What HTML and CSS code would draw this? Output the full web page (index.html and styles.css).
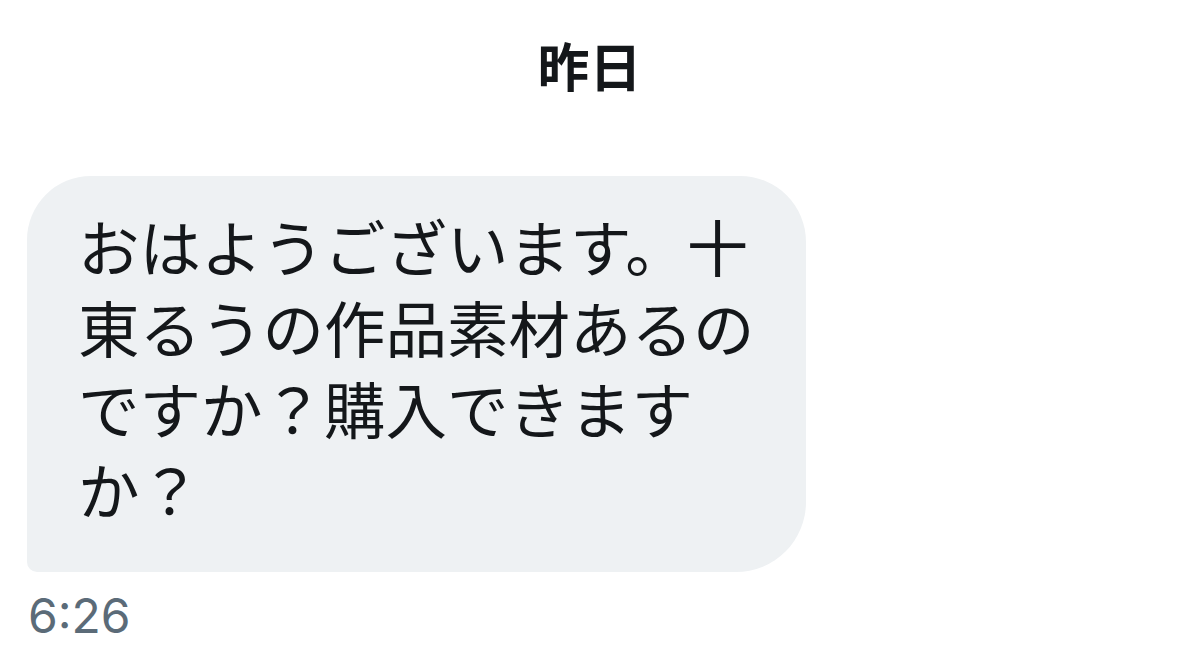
FILE: index.html
```html
<!DOCTYPE html>
<html lang="ja">
<head>
<meta charset="utf-8">
<title>Chat</title>
<link rel="stylesheet" href="styles.css">
</head>
<body>
<div class="chat">
  <div class="date">昨日</div>
  <div class="msg">
    <div class="bubble">おはようございます。十東るうの作品素材あるのですか？購入できますか？</div>
    <div class="time">6:26</div>
  </div>
</div>
</body>
</html>
```
FILE: styles.css
```css
html, body {
  margin: 0;
  padding: 0;
  background: #ffffff;
}
.chat {
  padding: 0 27px;
  font-family: "Noto Sans CJK JP", "Noto Sans", sans-serif;
  color: #14171a;
}
.date {
  padding-top: 35px;
  text-align: center;
  font-size: 52px;
  line-height: 60px;
  font-weight: 700;
}
.msg {
  margin-top: 81px;
  display: flex;
  flex-direction: column;
  align-items: flex-start;
}
.bubble {
  box-sizing: border-box;
  width: 779px;
  padding: 29px 44px 43px 51px;
  background: #eef1f3;
  border-radius: 64px 66px 70px 10px;
  font-size: 61.5px;
  line-height: 81px;
  color: #14171a;
}
.time {
  margin-top: 15px;
  padding-left: 1px;
  font-family: "Inter", "Liberation Sans", sans-serif;
  font-size: 48px;
  line-height: 58px;
  color: #5b6b78;
}
```
